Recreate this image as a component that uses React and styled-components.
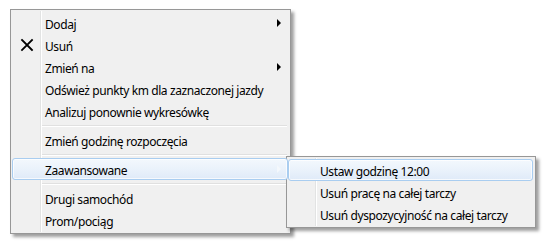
import React from "react";
import styled, { createGlobalStyle } from "styled-components";

const Global = createGlobalStyle`
  html, body { margin: 0; padding: 0; background: #ffffff; }
  body { font-family: "Segoe UI", "Noto Sans", "Open Sans", sans-serif; font-size: 12px; color: #000; }
`;

const Page = styled.div`
  position: relative;
  width: 547px;
  height: 245px;
  padding: 9px 0 0 10px;
  box-sizing: border-box;
`;

const Menu = styled.div`
  position: ${(p) => (p.$sub ? "absolute" : "relative")};
  ${(p) => (p.$sub ? "left: 286px; top: 156px;" : "")}
  width: ${(p) => p.$width}px;
  box-sizing: border-box;
  display: flex;
  flex-direction: column;
  padding: 2px 2px 2px 1px;
  background: #f0f0f0;
  border: 1px solid #979797;
  box-shadow: 3px 3px 3px rgba(0, 0, 0, 0.38);
  &::before {
    content: "";
    position: absolute;
    top: 1px;
    bottom: 1px;
    left: ${(p) => p.$gutter}px;
    width: 1px;
    background: #e2e3e3;
    border-right: 1px solid #ffffff;
  }
`;

const Row = styled.div`
  position: relative;
  height: 22px;
  display: flex;
  align-items: center;
  box-sizing: border-box;
  padding-top: 3px;
  padding-left: ${(p) => p.$indent}px;
  border: 1px solid ${(p) => (p.$hot ? "#a9cdf0" : "transparent")};
  border-radius: 3px;
  background: ${(p) =>
    p.$hot ? "linear-gradient(to bottom, #f3f8fd 0%, #eaf2fb 50%, #dfeaf8 100%)" : "transparent"};
  box-shadow: ${(p) => (p.$hot ? "inset 0 0 0 1px rgba(255,255,255,0.7)" : "none")};
  white-space: nowrap;
  z-index: 1;
`;

const Label = styled.span`
  line-height: 16px;
  letter-spacing: -0.4px;
`;

const IconSlot = styled.span`
  position: absolute;
  left: 7px;
  top: 3px;
  width: 14px;
  height: 14px;
  display: flex;
`;

const Arrow = styled.span`
  position: absolute;
  right: 6px;
  top: 6px;
  width: 0;
  height: 0;
  border-top: 4px solid transparent;
  border-bottom: 4px solid transparent;
  border-left: 4px solid ${(p) => (p.$pale ? "#f4f8fc" : "#000000")};
`;

const Separator = styled.div`
  height: 7px;
  display: flex;
  align-items: center;
  padding-left: ${(p) => p.$indent}px;
  &::after {
    content: "";
    flex: 1;
    height: 1px;
    background: #e0e0e0;
    border-bottom: 1px solid #ffffff;
    margin-right: 1px;
  }
`;

const CrossIcon = () => (
  <svg width="14" height="14" viewBox="0 0 14 14">
    <path d="M2 2 L12 12 M12 2 L2 12" stroke="#000" strokeWidth="1.8" strokeLinecap="square" />
  </svg>
);

const mainItems = [
  { label: "Dodaj", arrow: true },
  { label: "Usuń", icon: true },
  { label: "Zmień na", arrow: true },
  { label: "Odśwież punkty km dla zaznaczonej jazdy" },
  { label: "Analizuj ponownie wykresówkę" },
  { sep: true },
  { label: "Zmień godzinę rozpoczęcia" },
  { sep: true },
  { label: "Zaawansowane", arrow: true, hot: true },
  { sep: true },
  { label: "Drugi samochód" },
  { label: "Prom/pociąg" },
];

const subItems = [
  { label: "Ustaw godzinę 12:00", hot: true },
  { label: "Usuń pracę na całej tarczy" },
  { label: "Usuń dyspozycyjność na całej tarczy" },
];

export default function App() {
  return (
    <>
      <Global />
      <Page>
        <Menu $width={281} $gutter={29}>
          {mainItems.map((it, i) =>
            it.sep ? (
              <Separator key={i} $indent={30} />
            ) : (
              <Row key={i} $indent={32} $hot={it.hot}>
                {it.icon && (
                  <IconSlot>
                    <CrossIcon />
                  </IconSlot>
                )}
                <Label>{it.label}</Label>
                {it.arrow && <Arrow $pale={it.hot} />}
              </Row>
            )
          )}
        </Menu>
        <Menu $sub $width={250} $gutter={28}>
          {subItems.map((it, i) => (
            <Row key={i} $indent={31} $hot={it.hot}>
              <Label>{it.label}</Label>
            </Row>
          ))}
        </Menu>
      </Page>
    </>
  );
}
